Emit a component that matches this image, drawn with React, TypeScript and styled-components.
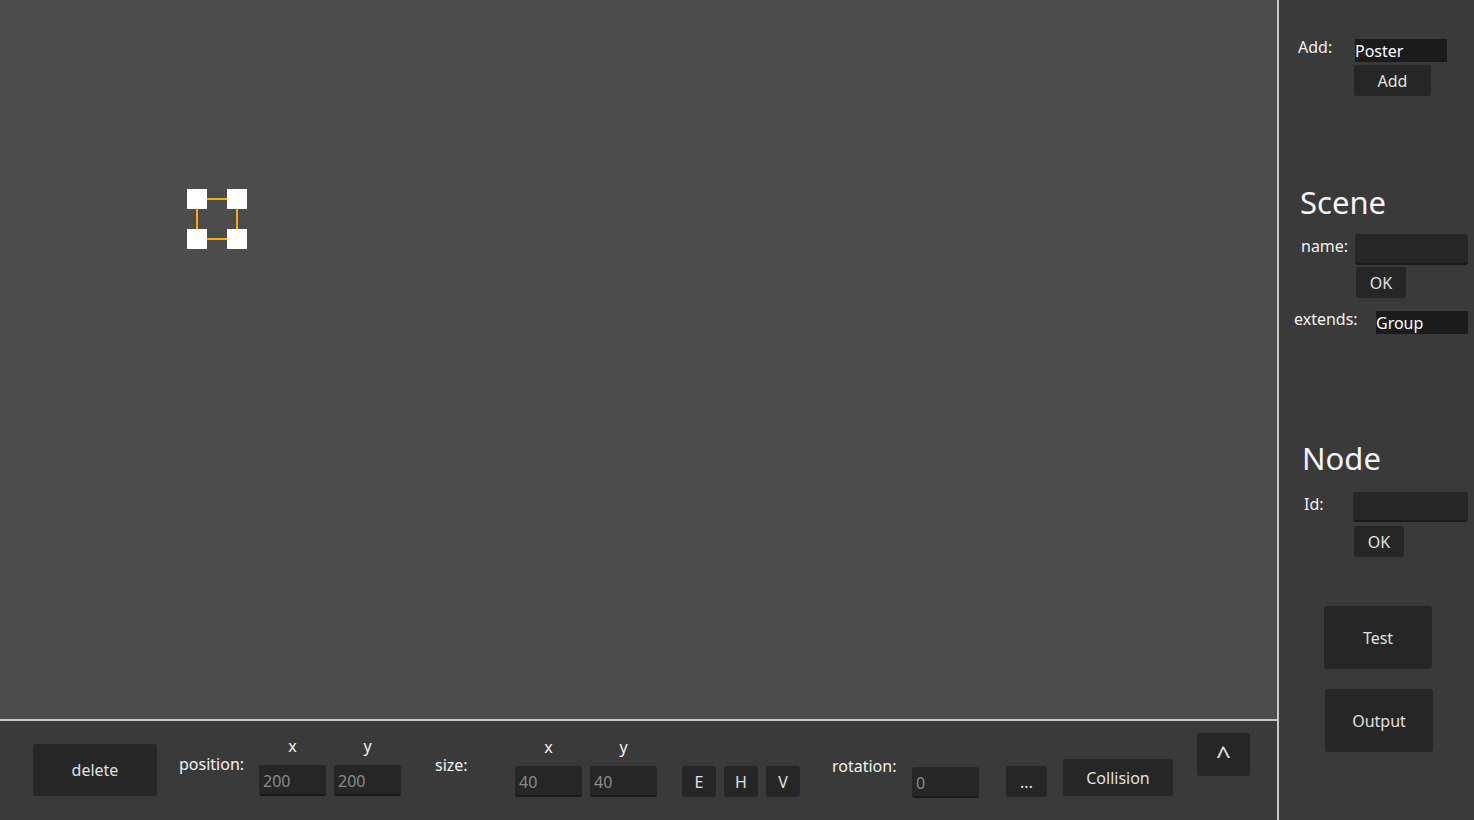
import React from "react";
import styled, { createGlobalStyle } from "styled-components";

const Global = createGlobalStyle`
  html, body { margin: 0; padding: 0; background: #3a3a3a; overflow: hidden; }
  body { font-family: "Noto Sans", "Open Sans", sans-serif; font-size: 16px; }
  * { box-sizing: border-box; }
`;

const Root = styled.div`
  display: grid;
  grid-template-columns: 1277px 197px;
  width: 1474px;
  height: 820px;
`;

const Main = styled.div`
  display: flex;
  flex-direction: column;
`;

const Canvas = styled.div`
  position: relative;
  flex: 0 0 721px;
  background: #4c4c4c;
  border-bottom: 2px solid #c8c8c8;
`;

const Gizmo = styled.svg`
  position: absolute;
  left: 187px;
  top: 189px;
`;

const BottomBar = styled.div`
  flex: 1;
  display: flex;
  align-items: flex-start;
  background: #3a3a3a;
  padding-left: 33px;
`;

const Slot = styled.div<{ $top: number; $left?: number }>`
  margin-top: ${(p) => p.$top}px;
  margin-left: ${(p) => p.$left ?? 0}px;
  display: flex;
  flex-shrink: 0;
`;

const Button = styled.button<{ $w: number; $h: number; $size?: number }>`
  width: ${(p) => p.$w}px;
  height: ${(p) => p.$h}px;
  padding: 0;
  border: none;
  border-radius: 3px;
  background: #262626;
  color: #e0e0e0;
  font-family: "Noto Sans", sans-serif;
  font-size: ${(p) => p.$size ?? 16}px;
  line-height: ${(p) => p.$h + 1}px;
  text-align: center;
  flex-shrink: 0;
`;

const Label = styled.div<{ $w?: number }>`
  width: ${(p) => (p.$w ? `${p.$w}px` : "auto")};
  color: #f2f2f2;
  font-size: 16px;
  line-height: 22px;
  white-space: nowrap;
  flex-shrink: 0;
`;

const Input = styled.div<{ $w: number; $h?: number }>`
  width: ${(p) => p.$w}px;
  height: ${(p) => p.$h ?? 31}px;
  background: #262626;
  border-radius: 3px;
  border-bottom: 2px solid #1a1a1a;
  color: #8a8a8a;
  font-size: 16px;
  line-height: 33px;
  padding-left: 4px;
  flex-shrink: 0;
`;

const Option = styled.div<{ $w: number }>`
  width: ${(p) => p.$w}px;
  height: 23px;
  background: #1b1b1b;
  color: #ffffff;
  font-size: 16px;
  line-height: 24px;
  flex-shrink: 0;
`;

const Pair = styled.div`
  display: flex;
  gap: 8px;
`;

const Axis = styled.div`
  display: flex;
  flex-direction: column;
  align-items: center;
  gap: 8px;
`;

const Group = styled.div<{ $gap?: number }>`
  display: flex;
  gap: ${(p) => p.$gap ?? 8}px;
`;

const Panel = styled.div`
  display: flex;
  flex-direction: column;
  align-items: flex-start;
  background: #3a3a3a;
  border-left: 2px solid #c8c8c8;
`;

const Row = styled.div<{ $top: number; $left: number }>`
  display: flex;
  align-items: flex-start;
  margin-top: ${(p) => p.$top}px;
  margin-left: ${(p) => p.$left}px;
`;

const Stack = styled.div<{ $gap: number }>`
  display: flex;
  flex-direction: column;
  align-items: flex-start;
  gap: ${(p) => p.$gap}px;
`;

const Heading = styled.div<{ $top: number; $left: number }>`
  margin-top: ${(p) => p.$top}px;
  margin-left: ${(p) => p.$left}px;
  color: #f5f5f5;
  font-size: 31px;
  line-height: 38px;
`;

const Offset = styled.div<{ $top?: number; $left?: number }>`
  margin-top: ${(p) => p.$top ?? 0}px;
  margin-left: ${(p) => p.$left ?? 0}px;
`;

function AxisField({ name, value }: { name: string; value: string }) {
  return (
    <Axis>
      <Label>{name}</Label>
      <Input $w={67}>{value}</Input>
    </Axis>
  );
}

export default function App() {
  return (
    <>
      <Global />
      <Root>
        <Main>
          <Canvas>
            <Gizmo width="60" height="60" viewBox="0 0 60 60">
              <rect x="10" y="10" width="40" height="40" fill="none" stroke="#ffaa00" strokeWidth="2" />
              <rect x="0" y="0" width="20" height="20" fill="#ffffff" />
              <rect x="40" y="0" width="20" height="20" fill="#ffffff" />
              <rect x="0" y="40" width="20" height="20" fill="#ffffff" />
              <rect x="40" y="40" width="20" height="20" fill="#ffffff" />
            </Gizmo>
          </Canvas>
          <BottomBar>
            <Slot $top={23}>
              <Button $w={124} $h={52}>delete</Button>
            </Slot>
            <Slot $top={32} $left={22}>
              <Label $w={80}>position:</Label>
            </Slot>
            <Slot $top={14}>
              <Pair>
                <AxisField name="x" value="200" />
                <AxisField name="y" value="200" />
              </Pair>
            </Slot>
            <Slot $top={33} $left={34}>
              <Label $w={80}>size:</Label>
            </Slot>
            <Slot $top={15}>
              <Pair>
                <AxisField name="x" value="40" />
                <AxisField name="y" value="40" />
              </Pair>
            </Slot>
            <Slot $top={45} $left={25}>
              <Group>
                <Button $w={34} $h={31}>E</Button>
                <Button $w={34} $h={31}>H</Button>
                <Button $w={34} $h={31}>V</Button>
              </Group>
            </Slot>
            <Slot $top={34} $left={32}>
              <Label $w={80}>rotation:</Label>
            </Slot>
            <Slot $top={46}>
              <Input $w={67}>0</Input>
            </Slot>
            <Slot $top={45} $left={27}>
              <Button $w={41} $h={31}>...</Button>
            </Slot>
            <Slot $top={38} $left={16}>
              <Button $w={110} $h={37}>Collision</Button>
            </Slot>
            <Slot $top={12} $left={24}>
              <Button $w={53} $h={43} $size={26}>^</Button>
            </Slot>
          </BottomBar>
        </Main>
        <Panel>
          <Row $top={36} $left={19}>
            <Label $w={56}>Add:</Label>
            <Stack $gap={3}>
              <Offset $top={3} $left={1}>
                <Option $w={92}>Poster</Option>
              </Offset>
              <Button $w={77} $h={31}>Add</Button>
            </Stack>
          </Row>
          <Heading $top={87} $left={21}>Scene</Heading>
          <Row $top={13} $left={22}>
            <Offset $top={1}>
              <Label $w={54}>name:</Label>
            </Offset>
            <Stack $gap={2}>
              <Input $w={113} />
              <Offset $left={1}>
                <Button $w={50} $h={31}>OK</Button>
              </Offset>
            </Stack>
          </Row>
          <Row $top={10} $left={15}>
            <Label $w={82}>extends:</Label>
            <Offset $top={3}>
              <Option $w={92}>Group</Option>
            </Offset>
          </Row>
          <Heading $top={105} $left={23}>Node</Heading>
          <Row $top={15} $left={25}>
            <Offset $top={1}>
              <Label $w={49}>Id:</Label>
            </Offset>
            <Stack $gap={4}>
              <Input $w={115} $h={30} />
              <Offset $left={1}>
                <Button $w={50} $h={31}>OK</Button>
              </Offset>
            </Stack>
          </Row>
          <Offset $top={49} $left={45}>
            <Button $w={108} $h={63}>Test</Button>
          </Offset>
          <Offset $top={20} $left={46}>
            <Button $w={108} $h={63}>Output</Button>
          </Offset>
        </Panel>
      </Root>
    </>
  );
}
